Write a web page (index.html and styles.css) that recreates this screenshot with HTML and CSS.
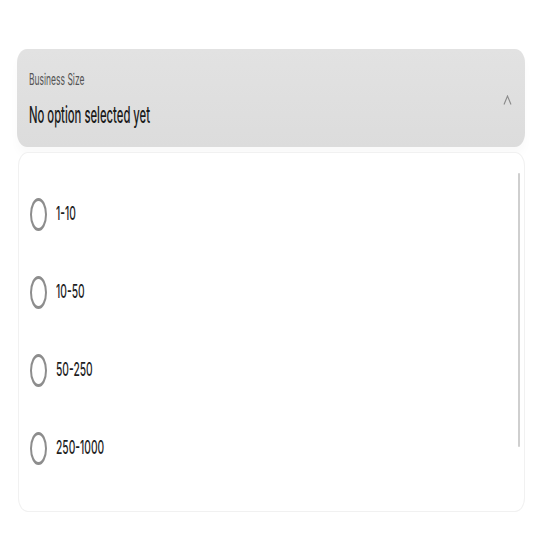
FILE: index.html
```html
<!DOCTYPE html>
<html lang="en">
<head>
    <meta charset="UTF-8">
    <meta name="viewport" content="width=device-width, initial-scale=1.0">
    <title>Business Size</title>
    <link rel="stylesheet" href="styles.css">
</head>
<body>
    <div class="page">
        <!-- select header -->
        <div class="select-head">
            <div class="select-texts">
                <span class="label"><span class="squish">Business Size</span></span>
                <span class="value"><span class="squish">No option selected yet</span></span>
            </div>
            <svg class="chevron" width="9" height="10" viewBox="0 0 9 10">
                <polyline points="1,9.5 4.5,1 8,9.5" fill="none" stroke="#8a8a8a" stroke-width="1.1"/>
            </svg>
        </div>

        <!-- options list -->
        <div class="options">
            <div class="option"><span class="radio"></span><span class="opt-text"><span class="squish">1-10</span></span></div>
            <div class="option"><span class="radio"></span><span class="opt-text"><span class="squish">10-50</span></span></div>
            <div class="option"><span class="radio"></span><span class="opt-text"><span class="squish">50-250</span></span></div>
            <div class="option"><span class="radio"></span><span class="opt-text"><span class="squish">250-1000</span></span></div>
            <div class="scroll-thumb"></div>
        </div>
    </div>
</body>
</html>
```

FILE: styles.css
```css
html, body {
    margin: 0;
    padding: 0;
    background-color: #ffffff;
}
body {
    font-family: Inter, "Liberation Sans", sans-serif;
    color: #1c1c1c;
}
.page {
    padding: 49px 17px 0 17px;
}
.squish {
    display: inline-block;
    transform: scaleX(0.53);
    transform-origin: left center;
    white-space: nowrap;
}
.select-head {
    height: 98px;
    box-sizing: border-box;
    padding: 0 13px 0 12px;
    display: flex;
    align-items: center;
    justify-content: space-between;
    background: linear-gradient(#e2e2e2, #dcdcdc);
    border-radius: 10px / 14px;
    box-shadow: 0 8px 10px rgba(0, 0, 0, 0.025);
}
.select-texts {
    display: flex;
    flex-direction: column;
    gap: 12px;
    padding-top: 1px;
}
.label {
    font-size: 16px;
    line-height: 20px;
    color: #555555;
}
.value {
    font-size: 23px;
    line-height: 28px;
    font-weight: 500;
    color: #1a1a1a;
}
.value .squish {
    transform: scaleX(0.49);
}
.chevron {
    margin-top: 4px;
}
.options {
    position: relative;
    margin-top: 5px;
    margin-left: 1px;
    padding: 22px 0 24px 11px;
    background-color: #ffffff;
    border: 1px solid #f1f1f1;
    border-radius: 10px / 14px;
}
.option {
    height: 78px;
    display: flex;
    align-items: center;
    gap: 9px;
}
.radio {
    width: 13px;
    height: 27px;
    border-style: solid;
    border-color: #8d8d8d;
    border-width: 3px 2px;
    border-radius: 50%;
    flex-shrink: 0;
}
.opt-text {
    font-size: 19px;
    line-height: 22px;
    font-weight: 500;
    color: #1f1f1f;
}
.opt-text .squish {
    transform: scaleX(0.54);
}
.scroll-thumb {
    position: absolute;
    top: 20px;
    right: 4px;
    width: 2px;
    height: 274px;
    background-color: #cfcfcf;
    border-radius: 1px;
}
```
